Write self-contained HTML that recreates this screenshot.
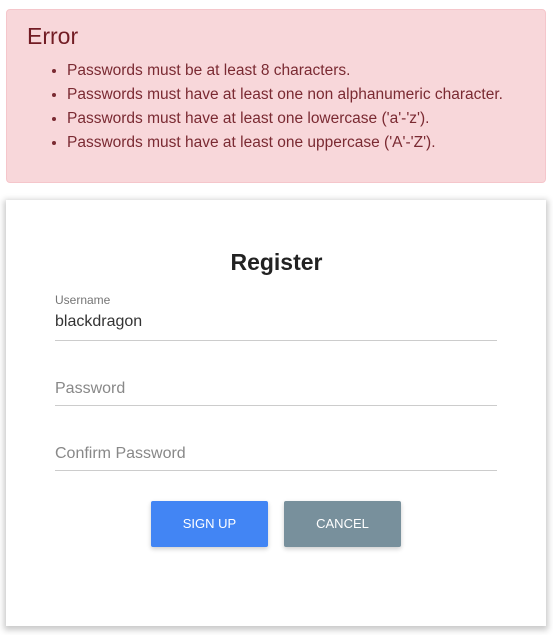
<!DOCTYPE html>
<html><head><style>
body{margin:0;width:553px;height:635px;background:#fff;font-family:"Liberation Sans",sans-serif;position:relative;overflow:hidden}
.alert{position:absolute;left:6px;top:9px;width:538px;height:172px;background:#f8d7da;border:1px solid #f5c6cb;border-radius:4px;color:#721c24}
.alert h4{position:absolute;left:20px;top:13px;margin:0;font-weight:normal;font-size:23px;line-height:26px;color:#721c24}
.alert ul{position:absolute;left:20px;top:49px;margin:0;padding-left:40px;font-size:15.5px;line-height:24px;color:#7a2a32}
.card{position:absolute;left:6px;top:200px;width:540px;height:426px;background:#fff;box-shadow:0 2px 6px 2px rgba(0,0,0,.22)}
.title{position:absolute;left:0;width:100%;top:249px;text-align:center;font-size:23px;font-weight:bold;color:#222}
.lbl{position:absolute;left:55px;font-size:12px;color:#757575}
.val{position:absolute;left:55px;font-size:16px;color:#333}
.ph{position:absolute;left:55px;font-size:16px;color:#888}
.line{position:absolute;left:55px;width:442px;height:1px;background:#ccc}
.btn{position:absolute;top:501px;width:117px;height:46px;border-radius:2px;color:#fff;font-size:13px;text-align:center;line-height:46px;box-shadow:0 2px 5px rgba(0,0,0,.2)}
</style></head><body>
<div class="alert"><h4>Error</h4>
<ul><li>Passwords must be at least 8 characters.</li><li>Passwords must have at least one non alphanumeric character.</li><li>Passwords must have at least one lowercase ('a'-'z').</li><li>Passwords must have at least one uppercase ('A'-'Z').</li></ul></div>
<div class="card"></div>
<div class="title">Register</div>
<div class="lbl" style="top:293px">Username</div>
<div class="val" style="top:313px">blackdragon</div>
<div class="line" style="top:340px"></div>
<div class="ph" style="top:380px">Password</div>
<div class="line" style="top:405px"></div>
<div class="ph" style="top:445px">Confirm Password</div>
<div class="line" style="top:470px"></div>
<div class="btn" style="left:151px;background:#4285f4">SIGN UP</div>
<div class="btn" style="left:284px;background:#78909c">CANCEL</div>
</body></html>
